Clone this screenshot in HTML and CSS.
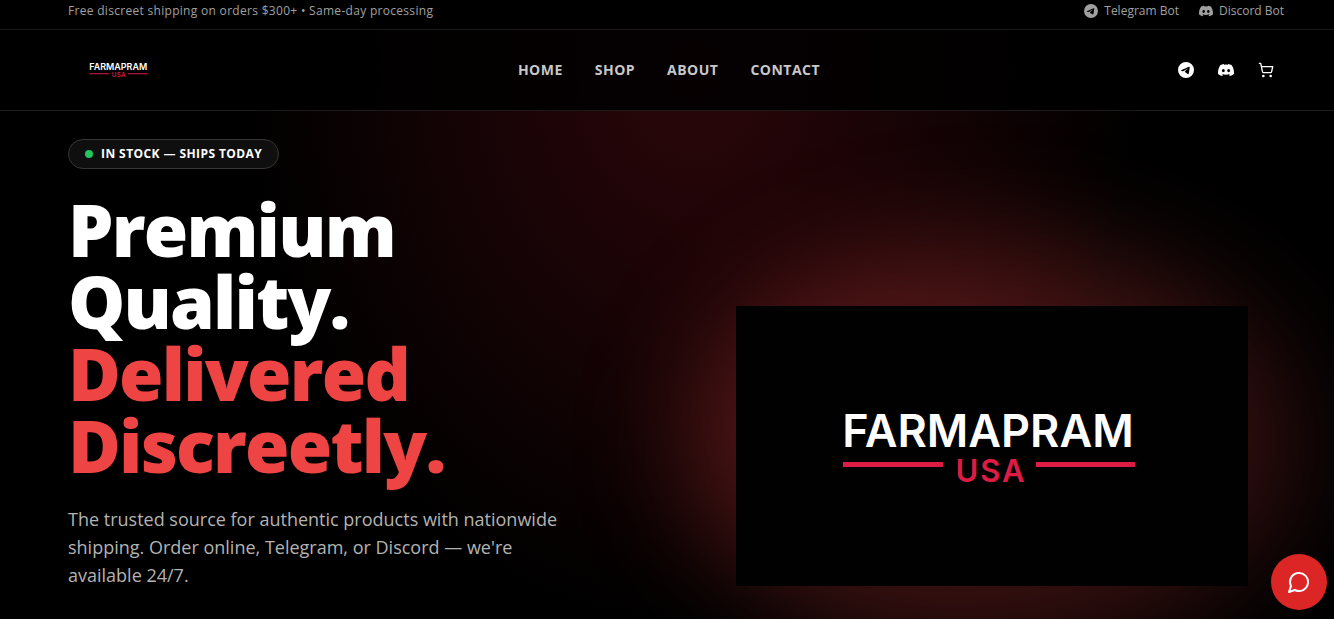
FILE: index.html
```html
<!DOCTYPE html>
<html lang="en">
<head>
<meta charset="utf-8">
<meta name="viewport" content="width=device-width, initial-scale=1">
<title>Farmapram USA</title>
<link rel="stylesheet" href="styles.css">
</head>
<body>
<svg class="sprite" aria-hidden="true">
  <symbol id="telegram" viewBox="0 0 24 24"><path fill="currentColor" d="M11.944 0A12 12 0 0 0 0 12a12 12 0 0 0 12 12 12 12 0 0 0 12-12A12 12 0 0 0 12 0a12 12 0 0 0-.056 0zm4.962 7.224c.1-.002.321.023.465.14a.506.506 0 0 1 .171.325c.016.093.036.306.02.472-.18 1.898-.962 6.502-1.36 8.627-.168.9-.499 1.201-.82 1.23-.696.065-1.225-.46-1.9-.902-1.056-.693-1.653-1.124-2.678-1.8-1.185-.78-.417-1.21.258-1.91.177-.184 3.247-2.977 3.307-3.23.007-.032.014-.15-.056-.212s-.174-.041-.249-.024c-.106.024-1.793 1.14-5.061 3.345-.48.33-.913.49-1.302.48-.428-.008-1.252-.241-1.865-.44-.752-.245-1.349-.374-1.297-.789.027-.216.325-.437.893-.663 3.498-1.524 5.83-2.529 6.998-3.014 3.332-1.386 4.025-1.627 4.476-1.635z"/></symbol>
  <symbol id="discord" viewBox="0 0 24 24"><path fill="currentColor" d="M20.317 4.37a19.791 19.791 0 0 0-4.885-1.515.074.074 0 0 0-.079.037c-.21.375-.444.864-.608 1.25a18.27 18.27 0 0 0-5.487 0 12.64 12.64 0 0 0-.617-1.25.077.077 0 0 0-.079-.037A19.736 19.736 0 0 0 3.677 4.37a.07.07 0 0 0-.032.027C.533 9.046-.32 13.58.099 18.057a.082.082 0 0 0 .031.057 19.9 19.9 0 0 0 5.993 3.03.078.078 0 0 0 .084-.028c.462-.63.874-1.295 1.226-1.994a.076.076 0 0 0-.041-.106 13.107 13.107 0 0 1-1.872-.892.077.077 0 0 1-.008-.128c.126-.094.252-.192.372-.292a.074.074 0 0 1 .077-.01c3.928 1.793 8.18 1.793 12.062 0a.074.074 0 0 1 .078.01c.12.098.246.198.373.292a.077.077 0 0 1-.006.127 12.299 12.299 0 0 1-1.873.892.077.077 0 0 0-.041.107c.36.698.772 1.362 1.225 1.993a.076.076 0 0 0 .084.028 19.839 19.839 0 0 0 6.002-3.03.077.077 0 0 0 .032-.054c.5-5.177-.838-9.674-3.549-13.66a.061.061 0 0 0-.031-.03zM8.02 15.33c-1.183 0-2.157-1.085-2.157-2.419 0-1.333.956-2.419 2.157-2.419 1.21 0 2.176 1.096 2.157 2.42 0 1.333-.956 2.418-2.157 2.418zm7.975 0c-1.183 0-2.157-1.085-2.157-2.419 0-1.333.955-2.419 2.157-2.419 1.21 0 2.176 1.096 2.157 2.42 0 1.333-.946 2.418-2.157 2.418z"/></symbol>
</svg>

<div class="topbar">
  <div class="container topbar-row">
    <p class="topbar-note">Free discreet shipping on orders $300+ • Same-day processing</p>
    <div class="topbar-links">
      <a class="topbar-link" href="#telegram-bot"><svg class="icon-sm" aria-hidden="true"><use href="#telegram"/></svg>Telegram Bot</a>
      <a class="topbar-link" href="#discord-bot"><svg class="icon-sm" aria-hidden="true"><use href="#discord"/></svg>Discord Bot</a>
    </div>
  </div>
</div>

<div class="stage">
  <header class="header">
    <div class="container header-row">
      <a class="brand" href="#home" aria-label="Farmapram USA home">
        <svg class="logo" viewBox="0 0 512 280">
          <text class="logo-name" x="252" y="141" text-anchor="middle">FARMAPRAM</text>
          <path fill="#dc1c45" d="M107 156h100v5H107zM300 156h99v5h-99z"/>
          <text class="logo-country" x="255" y="176" text-anchor="middle">USA</text>
        </svg>
      </a>
      <nav class="nav">
        <a class="nav-link" href="#home">HOME</a>
        <a class="nav-link" href="#shop">SHOP</a>
        <a class="nav-link" href="#about">ABOUT</a>
        <a class="nav-link" href="#contact">CONTACT</a>
      </nav>
      <div class="actions">
        <a class="action" href="#telegram-bot" aria-label="Telegram"><svg class="icon" aria-hidden="true"><use href="#telegram"/></svg></a>
        <a class="action" href="#discord-bot" aria-label="Discord"><svg class="icon" aria-hidden="true"><use href="#discord"/></svg></a>
        <button class="action" type="button" aria-label="Cart"><svg class="icon" viewBox="0 0 24 24" fill="none" stroke="currentColor" stroke-width="2" stroke-linecap="round" stroke-linejoin="round" aria-hidden="true"><circle cx="8" cy="21" r="1"/><circle cx="19" cy="21" r="1"/><path d="M2.05 2.05h2l2.66 12.42a2 2 0 0 0 2 1.58h9.78a2 2 0 0 0 1.95-1.57l1.65-7.43H5.12"/></svg></button>
      </div>
    </div>
  </header>

  <main class="container hero">
    <div class="hero-copy">
      <p class="badge"><span class="dot"></span>IN STOCK — SHIPS TODAY</p>
      <h1 class="title">Premium<br>Quality.<br><span class="title-accent">Delivered<br>Discreetly.</span></h1>
      <p class="lead">The trusted source for authentic products with nationwide shipping. Order online, Telegram, or Discord — we're available 24/7.</p>
    </div>
    <div class="hero-visual">
      <div class="card">
        <svg class="card-logo" viewBox="0 0 512 280">
          <text class="logo-name" x="252" y="141" text-anchor="middle">FARMAPRAM</text>
          <path fill="#dc1c45" d="M107 156h100v5H107zM300 156h99v5h-99z"/>
          <text class="logo-country" x="255" y="176" text-anchor="middle">USA</text>
        </svg>
      </div>
    </div>
  </main>
</div>

<button class="chat" type="button" aria-label="Open chat"><svg class="icon-lg" viewBox="0 0 24 24" fill="none" stroke="currentColor" stroke-width="2" stroke-linecap="round" stroke-linejoin="round" aria-hidden="true"><path d="M7.9 20A9 9 0 1 0 4 16.1L2 22Z"/></svg></button>
</body>
</html>
```
FILE: styles.css
```css
* { box-sizing: border-box; }

body {
  margin: 0;
  min-height: 100vh;
  display: flex;
  flex-direction: column;
  background: #000;
  color: #fff;
  font-family: "Open Sans", "Noto Sans", sans-serif;
}

p, h1 { margin: 0; }
a { color: inherit; text-decoration: none; }
button { border: 0; padding: 0; background: none; color: inherit; font: inherit; cursor: pointer; }
svg { display: block; }

.sprite { position: absolute; width: 0; height: 0; }
.container { width: 100%; max-width: 1334px; margin: 0 auto; padding: 0 50px 0 68px; }

.icon-sm { width: 14px; height: 14px; }
.icon { width: 16px; height: 16px; }
.icon-lg { width: 24px; height: 24px; }

.topbar { border-bottom: 1px solid #1a1a1a; color: #a0a0a0; font-size: 12px; line-height: 20px; letter-spacing: 0.025em; }
.topbar-row { display: flex; justify-content: space-between; padding-top: 1px; padding-bottom: 8px; }
.topbar-links { display: flex; gap: 20px; }
.topbar-link { display: flex; align-items: center; gap: 6px; letter-spacing: normal; }

.stage {
  flex: 1;
  overflow: clip;
  background: radial-gradient(ellipse 450px 560px at 52% 40px, #29060a 0%, #230508 20%, #120304 60%, transparent 100%);
}

.header { border-bottom: 1px solid #1c1a1a; background: rgba(0, 0, 0, 0.85); }
.header-row { display: flex; align-items: center; justify-content: space-between; height: 80px; }
.logo { width: 102px; height: 56px; }
.logo-name { fill: #fff; font: 600 45px Inter, sans-serif; }
.logo-country { fill: #dc1c45; font: 600 31px Inter, sans-serif; letter-spacing: 2px; }
.nav { display: flex; gap: 32px; }
.nav-link { color: #c8c8c8; font-size: 14px; font-weight: 700; line-height: 20px; letter-spacing: 0.035em; }
.actions { display: flex; gap: 4px; }
.action { display: grid; place-items: center; width: 36px; height: 36px; }

.hero { display: grid; grid-template-columns: 1fr 1fr; gap: 48px; padding-top: 28px; padding-bottom: 28px; }
.hero-copy { display: flex; flex-direction: column; align-items: flex-start; gap: 24px; }
.badge {
  display: flex;
  align-items: center;
  gap: 8px;
  padding: 6px 16px;
  border: 1px solid #383535;
  border-radius: 999px;
  background: rgba(255, 255, 255, 0.06);
  font-size: 12px;
  font-weight: 700;
  line-height: 16px;
  letter-spacing: 0.035em;
}
.dot { width: 8px; height: 8px; border-radius: 50%; background: #22c55e; }
.title { font-size: 72px; font-weight: 800; line-height: 72px; letter-spacing: -0.025em; }
.title-accent { color: #ef4444; }
.lead { max-width: 512px; color: #b3b3b3; font-size: 18px; line-height: 28px; }

.hero-visual { display: grid; justify-items: center; align-content: start; padding-top: 167px; }
.card { position: relative; width: 100%; max-width: 512px; }
.card::before {
  content: "";
  position: absolute;
  inset: -64px -48px;
  border-radius: 50%;
  background: linear-gradient(135deg, rgba(239, 68, 68, 0.34), rgba(239, 68, 68, 0.18));
  filter: blur(56px);
}
.card-logo { position: relative; width: 100%; height: auto; background: #010101; }

.chat {
  position: fixed;
  right: 7px;
  bottom: 9px;
  display: grid;
  place-items: center;
  width: 56px;
  height: 56px;
  border-radius: 50%;
  background: #dc2626;
}
```
